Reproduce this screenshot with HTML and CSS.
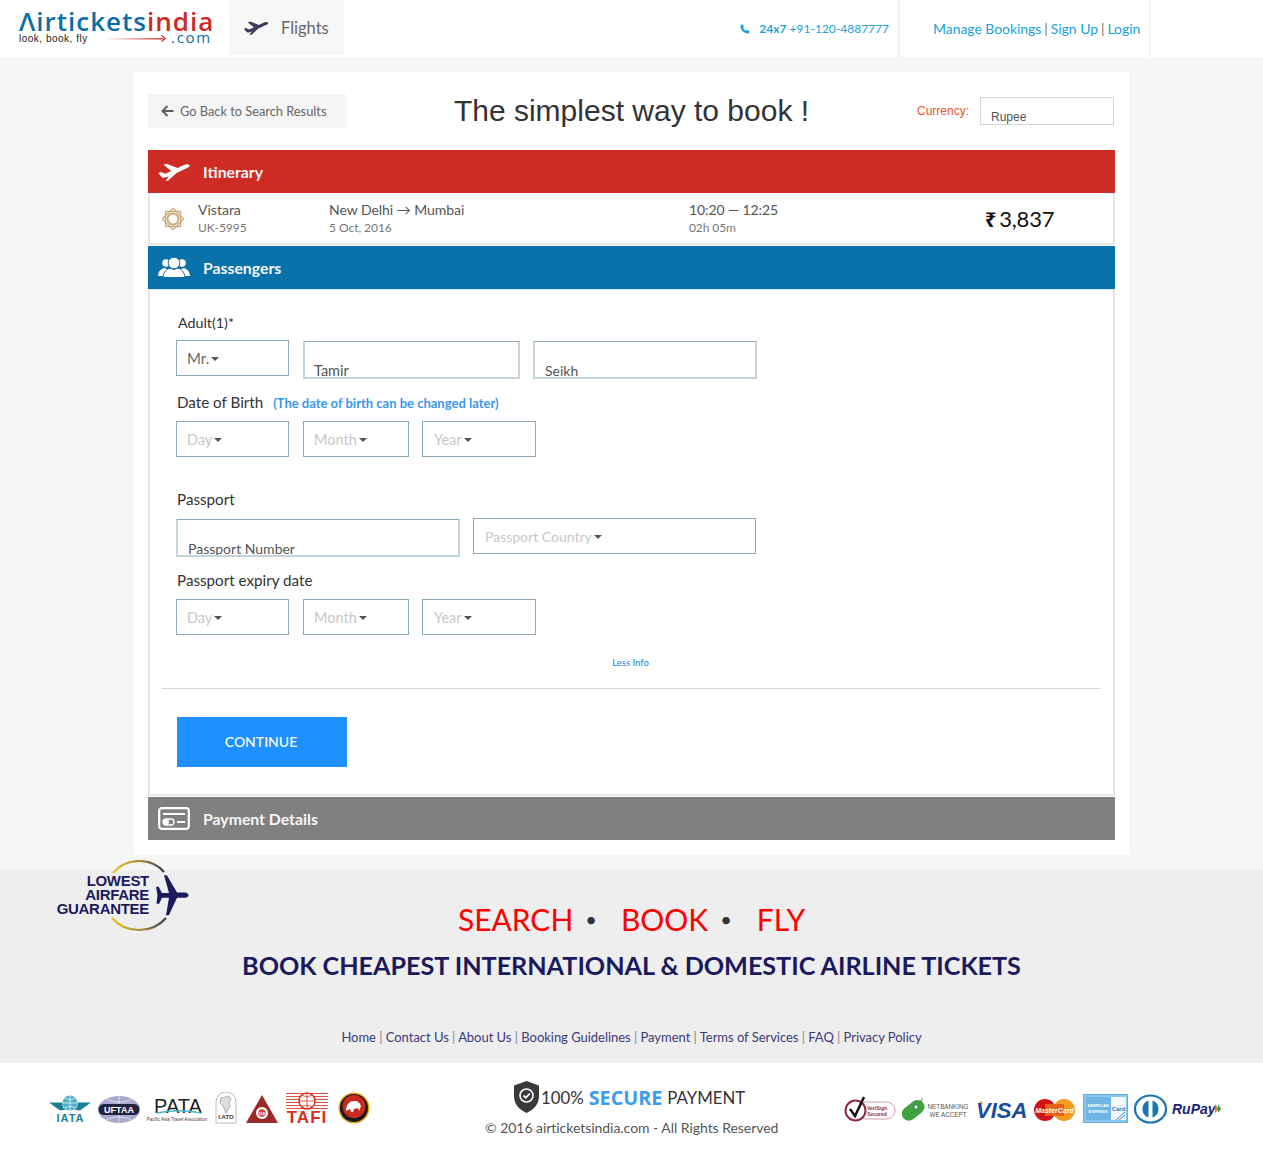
FILE: index.html
```html
<!DOCTYPE html>
<html lang="en">
<head>
<meta charset="utf-8">
<title>Airticketsindia - Book</title>
<link rel="stylesheet" href="styles.css">
</head>
<body>
<header class="topbar">
  <a class="logo">
    <span class="logo-main"><span class="blue">Λirtickets</span><span class="red">india</span></span>
    <span class="logo-sub"><span class="tagline">look, book, fly</span>
      <svg class="logo-arrow" width="62" height="8" viewBox="0 0 62 8"><defs><linearGradient id="ar"><stop offset="0" stop-color="#fff"/><stop offset="1" stop-color="#c8281f"/></linearGradient></defs><rect x="0" y="3.200" width="58" height="1.300" fill="url(#ar)"/><path d="M56 0.500l3 3-3 3 1 .4 4-3.400-4-3.400z" fill="#c8281f"/></svg>
      <span class="dotcom">.com</span></span>
  </a>
  <div class="tab">
    <svg class="tab-plane" width="26" height="14" viewBox="0 0 32 18"><path d="M31.500 2.300c-.9-1.500-4-1.100-6 0L19.600 5 8.400.800 5.500 1.800 13.300 8l-6 2.800-4.400-1.700-2.400 1 3.300 4.200c1 .8 3 .5 5-.2l1.800-.7L7.500 18l2.800-.4 8.300-7.600 10-4.700c2-1 3.500-1.700 2.900-3z" fill="#3f3c59"/></svg>
    <span>Flights</span>
  </div>
  <div class="spacer"></div>
  <div class="phone">
    <svg width="10" height="10" viewBox="0 0 10 10"><path d="M2.300.3L.700 1.300C0 3 1 5.500 2.700 7.300 4.500 9 7 10 8.700 9.300l1-1.600-2.200-1.900-1.300 1C5 6.500 3.500 5 3 3.800l1-1.300z" fill="#1aa0dc"/></svg>
    <span><b>24x7</b> +91-120-4887777</span>
  </div>
  <nav class="account"><a>Manage Bookings</a><i>|</i><a>Sign Up</a><i>|</i><a>Login</a></nav>
</header>

<main class="card">
  <div class="intro">
    <a class="back">
      <svg width="13" height="12" viewBox="0 0 13 12"><path d="M6.500 1L1.500 6l5 5M2 6h10.500" fill="none" stroke="#5f5f5f" stroke-width="2"/></svg>
      <span>Go Back to Search Results</span>
    </a>
    <h1>The simplest way to book !</h1>
    <div class="currency"><label>Currency:</label><div class="currency-box">Rupee</div></div>
  </div>

  <section class="bar bar-red">
    <svg width="32" height="18" viewBox="0 0 32 18"><path d="M31.500 2.300c-.9-1.500-4-1.100-6 0L19.600 5 8.400.8 5.500 1.800 13.300 8l-6 2.800-4.400-1.700-2.400 1 3.300 4.200c1 .8 3 .5 5-.2l1.800-.7L7.500 18l2.800-.4 8.300-7.600 10-4.700c2-1 3.500-1.700 2.900-3z" fill="#fff"/></svg>
    <span>Itinerary</span>
  </section>
  <div class="trip">
    <svg class="emblem" width="24" height="24" viewBox="0 0 24 24" fill="none" stroke="#c9aa78"><rect x="4.500" y="4.500" width="15" height="15" stroke-width="1.300"/><rect x="4.500" y="4.500" width="15" height="15" stroke-width="1.300" transform="rotate(45 12 12)"/><circle cx="12" cy="12" r="5.500" stroke-width="2" fill="#fff"/></svg>
    <div class="col-airline"><div class="t1">Vistara</div><div class="t2">UK-5995</div></div>
    <div class="col-route"><div class="t1">New Delhi → Mumbai</div><div class="t2">5 Oct, 2016</div></div>
    <div class="col-time"><div class="t1">10:20 — 12:25</div><div class="t2">02h 05m</div></div>
    <div class="price"><span class="rupee">₹</span>3,837</div>
  </div>

  <section class="bar bar-blue">
    <svg width="32" height="21" viewBox="0 0 32 21" fill="#fff"><circle cx="8" cy="6" r="3.800"/><circle cx="24" cy="6" r="3.800"/><path d="M0 19c.5-5 3-7 6-8l3 1 2 7zM32 19c-.5-5-3-7-6-8l-3 1-2 7z"/><circle cx="16" cy="6" r="5.800" stroke="#0a72aa"/><path d="M5 20.500c.5-6 4-8.500 7-9.500l4 1.500 4-1.500c3 1 6.500 3.500 7 9.500z" stroke="#0a72aa"/></svg>
    <span>Passengers</span>
  </section>

  <form class="pax">
    <div class="lbl lbl-adult">Adult(1)*</div>
    <div class="row row-name">
      <div class="sel w-title">Mr.<s></s></div>
      <div class="inp w-first">Tamir</div>
      <div class="inp w-last">Seikh</div>
    </div>
    <div class="lbl lbl-dob">Date of Birth <em>(The date of birth can be changed later)</em></div>
    <div class="row row-dob">
      <div class="sel w-title ph">Day<s></s></div>
      <div class="sel w-month ph">Month<s></s></div>
      <div class="sel w-year ph">Year<s></s></div>
    </div>
    <div class="lbl lbl-pass">Passport</div>
    <div class="row row-pass">
      <div class="inp w-num">Passport Number</div>
      <div class="sel w-country ph">Passport Country<s></s></div>
    </div>
    <div class="lbl lbl-exp">Passport expiry date</div>
    <div class="row">
      <div class="sel w-title ph">Day<s></s></div>
      <div class="sel w-month ph">Month<s></s></div>
      <div class="sel w-year ph">Year<s></s></div>
    </div>
    <a class="less">Less Info</a>
    <hr class="rule">
    <button type="button" class="cta">CONTINUE</button>
  </form>

  <section class="bar bar-grey">
    <svg width="32" height="23" viewBox="0 0 32 23" fill="none" stroke="#fff"><rect x="1.200" y="1.200" width="29.600" height="20.600" rx="2.500" stroke-width="2.200"/><path d="M5 7h22" stroke-width="2"/><path d="M19 15h8" stroke-width="2"/><rect x="5" y="12" width="11" height="6" rx="3" stroke-width="1.300"/><circle cx="8" cy="15" r="3" fill="#fff" stroke="none"/></svg>
    <span>Payment Details</span>
  </section>
</main>

<footer class="promo">
  <div class="guarantee">
    <svg width="134" height="72" viewBox="0 0 134 72">
      <defs><linearGradient id="gold"><stop offset="0" stop-color="#f0c419"/><stop offset=".55" stop-color="#a08a3a"/><stop offset="1" stop-color="#3d3a5c"/></linearGradient></defs>
      <path d="M58 13C65 5 73 1 84 1c10 0 19 4 25 11" fill="none" stroke="url(#gold)" stroke-width="2.200"/>
      <path d="M57 58c7 8 16 12 27 12 10 0 20-4 27-12" fill="none" stroke="url(#gold)" stroke-width="2.200"/>
      <path d="M109 15l3 .5L122 32.500h8c2 0 3.500 1.500 3.500 2.700s-1.500 2.500-3.500 2.500h-8L114 55l-3 .5 3-17.800h-7l-3 6.300-2.500-.5 1-8.500-1.500-8 2.500-.5 3.500 6.500h7z" fill="#1b1a5c"/>
      <text class="g-text" x="94" y="26" text-anchor="end">LOWEST</text>
      <text class="g-text" x="94" y="40" text-anchor="end">AIRFARE</text>
      <text class="g-text" x="94" y="54" text-anchor="end">GUARANTEE</text>
    </svg>
  </div>
  <div class="sbf"><span>SEARCH</span><i class="d1">•</i><span>BOOK</span><i class="d2">•</i><span>FLY</span></div>
  <h2>BOOK CHEAPEST INTERNATIONAL &amp; DOMESTIC AIRLINE TICKETS</h2>
  <nav class="links"><a>Home</a> | <a>Contact Us</a> | <a>About Us</a> | <a>Booking Guidelines</a> | <a>Payment</a> | <a>Terms of Services</a> | <a>FAQ</a> | <a>Privacy Policy</a></nav>
</footer>

<div class="trust">
  <div class="assoc">
    <svg width="50" height="32" viewBox="0 0 50 32"><circle cx="22" cy="11" r="7.500" fill="#4fb0c6"/><path d="M15 11h14M22 3.500v15M17 6c3 2 7 2 10 0M17 16c3-2 7-2 10 0" stroke="#fff" stroke-width=".7" fill="none"/><path d="M1 10.500l13 0 1 5 3 2-6 1zM43 10.500l-13 0-1 5-3 2 6 1z" fill="#1d7f97"/><text class="l-iata" x="22.500" y="30" text-anchor="middle">IATA</text></svg>
    <svg width="47" height="32" viewBox="0 0 47 32"><ellipse cx="21" cy="17.500" rx="21" ry="13.500" fill="#a9a8cf"/><path d="M0 17.500h42M21 4v27M8 7c8 4 18 4 26 0M8 28c8-4 18-4 26 0" stroke="#fff" stroke-width=".6" fill="none"/><rect x=".5" y="12" width="41" height="11" rx="5.500" fill="#23233f"/><text class="l-uftaa" x="21" y="21" text-anchor="middle">UFTAA</text></svg>
    <svg width="70" height="32" viewBox="0 0 70 32"><text class="l-pata" x="33" y="21" text-anchor="middle">PATA</text><path d="M12 21c14-3 30-3 44 0" stroke="#48b7c6" stroke-width="1.500" fill="none"/><text class="l-pata-s" x="32" y="29" text-anchor="middle">Pacific Asia Travel Association</text></svg>
    <svg width="31" height="32" viewBox="0 0 31 32"><path d="M1 31V10a10 10 0 0 1 20 0v21z" fill="#fff" stroke="#bbb"/><path d="M6 6l8-2 2 3-2 4 1 3-4 7-3-7-3-3z" fill="#ddd" stroke="#888" stroke-width=".6"/><text class="l-iato" x="11" y="26.500" text-anchor="middle">I.ATO</text></svg>
    <svg width="40" height="32" viewBox="0 0 40 32"><path d="M16 3l16 28H0z" fill="#9c2a2a"/><circle cx="16" cy="21" r="6" fill="#fff"/><circle cx="16" cy="21" r="3.800" fill="#c9453f"/><text class="l-taai" x="16" y="22.500" text-anchor="middle">TAAI</text></svg>
    <svg width="51" height="36" viewBox="0 0 51 36"><g stroke="#e2543f" stroke-width="1"><path d="M0 1.500h42M0 4.500h42M0 7.500h42M0 10.500h42M0 13.500h42M0 16.500h42"/></g><circle cx="21" cy="9" r="8" fill="#fff" stroke="#d8301f" stroke-width="1.500"/><path d="M13 9h16M21 1v16M16 3c3 2 7 2 10 0M16 15c3-2 7-2 10 0" stroke="#d8301f" fill="none" stroke-width=".8"/><text class="l-tafi" x="21" y="31" text-anchor="middle">TAFI</text></svg>
    <svg width="35" height="32" viewBox="0 0 35 32"><circle cx="17" cy="16" r="15.500" fill="#e8a81c"/><circle cx="17" cy="16" r="14" fill="#1a1a1a"/><circle cx="17" cy="14.500" r="11.500" fill="#c92a20"/><path d="M9 19c0-7 4-10 8-10 4 0 6 2 7 5l-2 5-1-3-4 1-1 3h-2l-1-3-2 1z" fill="#fff"/></svg>
  </div>
  <div class="secure">
    <div class="secure-line">
      <svg width="25" height="32" viewBox="0 0 25 32"><path d="M12.500 0L25 4.500V15c0 8-5 13.500-12.500 17C5 28.500 0 23 0 15V4.500z" fill="#3a3a3a"/><circle cx="12.500" cy="14.500" r="6.500" fill="none" stroke="#fff" stroke-width="1.600"/><path d="M9.500 14.500l2.300 2.300 4-4.300" fill="none" stroke="#fff" stroke-width="1.800"/></svg>
      <span class="pct">100%</span><b>SECURE</b><span class="pay">PAYMENT</span>
    </div>
    <div class="copy">© 2016 airticketsindia.com - All Rights Reserved</div>
  </div>
  <div class="pay-logos">
    <svg width="58" height="30" viewBox="0 0 58 30"><rect x="14" y="8" width="37" height="17" rx="8.500" fill="#fff" stroke="#d79aa6"/><circle cx="11.500" cy="16.500" r="10" fill="#fff" stroke="#8f2a44" stroke-width="2"/><path d="M6 15l5 7 9-19" fill="none" stroke="#111" stroke-width="2.500"/><text class="l-veri" x="33" y="15.500" text-anchor="middle">VeriSign</text><text class="l-veri" x="33" y="21.500" text-anchor="middle">Secured</text></svg>
    <svg width="74" height="30" viewBox="0 0 74 30"><rect x="-1" y="9.500" width="25" height="14" rx="7" transform="rotate(-38 11 17)" fill="#3fa142"/><circle cx="14" cy="13" r="2.200" fill="#fff" stroke="#2a7a2e"/><path d="M18 7c3 0 3-2 1-3" fill="none" stroke="#666"/><text class="l-net" x="46" y="15" text-anchor="middle">NETBANKING</text><text class="l-net" x="46" y="22.500" text-anchor="middle">WE ACCEPT</text></svg>
    <svg width="58" height="30" viewBox="0 0 58 30"><path d="M0 7.500c3 0 7 2 8 5l-2-5z" fill="#e9a321"/><text class="l-visa" x="0" y="24">VISA</text></svg>
    <svg width="49" height="30" viewBox="0 0 49 30"><circle cx="30" cy="16" r="11" fill="#f29c1f"/><circle cx="11" cy="16" r="11" fill="#d0121b"/><rect x="11" y="10" width="19" height="12" fill="#e8601c"/><text class="l-mc" x="20.500" y="18.500" text-anchor="middle">MasterCard</text></svg>
    <svg width="51" height="30" viewBox="0 0 51 30"><rect x=".5" y=".5" width="44" height="28" fill="#8cc8ee" stroke="#63aee0"/><rect x="28" y="3" width="15" height="23" fill="#f3f8fc"/><rect x="3" y="3" width="25" height="23" fill="#6fb6e6"/><text class="l-amex" x="15" y="13" text-anchor="middle">AMERICAN</text><text class="l-amex" x="15" y="19" text-anchor="middle">EXPRESS</text><text class="l-amexc" x="35.500" y="17" text-anchor="middle">Card</text><path d="M33 26l9-8M36 26l6-5" stroke="#3a8ac4"/></svg>
    <svg width="38" height="30" viewBox="0 0 38 30"><ellipse cx="16.500" cy="15" rx="15.500" ry="13.500" fill="#fff" stroke="#1b77b3" stroke-width="2.200"/><path d="M14.500 6.500a9 9 0 0 0 0 17zM18.500 6.500a9 9 0 0 1 0 17z" fill="#1b77b3"/></svg>
    <svg width="50" height="30" viewBox="0 0 50 30"><text class="l-rupay" x="0" y="20">RuPay</text><path d="M43 10l4 5-4 4z" fill="#ef7d22"/><path d="M46 10l3 5-3 4z" fill="#2e9a47"/></svg>
  </div>
</div>
</body>
</html>
```
FILE: styles.css
```css
* { box-sizing: border-box; }
html, body { margin: 0; padding: 0; }
body { background: #f6f6f6; font-family: Lato, "Open Sans", sans-serif; color: #444; width: 1263px; overflow-x: hidden; }
a { text-decoration: none; }

.topbar { display: flex; align-items: stretch; height: 57px; background: #fff; }
.logo { display: block; width: 229px; padding: 8px 0 0 19px; font-family: "Open Sans", sans-serif; }
.logo-main { display: block; font-size: 26px; line-height: 27px; font-weight: 600; letter-spacing: 1px; white-space: nowrap; }
.blue { color: #0b6fa6; }
.red { color: #ce2b25; }
.logo-sub { display: flex; align-items: center; height: 12px; margin-top: -3px; width: 193px; }
.tagline { width: 86px; font: 10px "Liberation Sans", sans-serif; color: #222; letter-spacing: .5px; white-space: nowrap; }
.logo-arrow { flex: none; margin-top: 2px; }
.dotcom { margin: -2px 0 0 4px; font-size: 15px; color: #0b6fa6; letter-spacing: 1.700px; line-height: 12px; }
.tab { display: flex; align-items: center; gap: 12px; width: 115px; height: 55px; padding-left: 14px; background: #f7f7f7; font-size: 16.500px; color: #666; }
.spacer { flex: 1; }
.phone { display: flex; align-items: center; gap: 9px; height: 57px; padding-right: 9px; font-size: 12px; color: #19a3de; white-space: nowrap; }
.phone b { font-weight: 700; }
.account { display: flex; align-items: center; width: 252px; height: 57px; padding-left: 33px; border-left: 2px solid #eee; border-right: 1px solid #eee; margin-right: 113px; font-size: 14px; letter-spacing: -.05px; color: #777; }
.account a { color: #19a3de; }
.account i { font-style: normal; margin: 0 3px; }

.card { width: 995px; height: 783px; margin: 15px 0 15px 134px; padding: 0 14px; background: #fff; }
.intro { display: flex; align-items: flex-start; height: 78px; }
.back { display: flex; flex: none; align-items: center; gap: 6px; width: 198px; height: 34px; margin-top: 22px; padding-left: 13px; background: #f5f5f5; font-size: 12.800px; color: #666; white-space: nowrap; }
.intro h1 { flex: 1; margin: 20px 0 0; text-align: center; font: 400 30px/38px "Liberation Sans", Arial, sans-serif; color: #333; }
.currency { display: flex; flex: none; align-items: center; width: 198px; margin-top: 25px; font: 12px "Liberation Sans", Arial, sans-serif; }
.currency label { width: 63px; color: #f0552b; }
.currency-box { width: 134px; height: 28px; padding: 12px 0 0 10px; border: 1px solid #d4d4d4; color: #555; line-height: 15px; }

.bar { display: flex; align-items: center; width: 967px; height: 43px; padding-left: 10px; color: #fff; font-size: 15.800px; font-weight: 700; }
.bar svg { margin-right: 13px; }
.bar-red { background: #ce2b25; }
.bar-blue { background: #0a72aa; margin-top: 1px; }
.bar-grey { background: #808080; margin-top: 1px; }
.bar span { color: #f4f6f8; }

.trip { display: flex; align-items: center; width: 967px; height: 52px; padding: 2px 0 0 11px; border: 2px solid #e4e8eb; border-top: 0; }
.emblem { flex: none; margin-right: 13px; }
.col-airline { width: 131px; }
.col-route { width: 360px; letter-spacing: -.04px; }
.col-time { width: 296px; letter-spacing: -.1px; }
.t1 { font-size: 14px; line-height: 18px; color: #555; }
.t2 { font-size: 12px; line-height: 18px; color: #777; }
.price { font-size: 22px; letter-spacing: -.2px; color: #111; white-space: nowrap; }
.rupee { margin-right: 3px; font: 700 20px "Noto Sans", "DejaVu Sans", sans-serif; }

.pax { width: 967px; height: 507px; padding: 0 12px; border: 2px solid #e4e8eb; border-top: 1px solid #e4e8eb; background: #fff; }
.lbl { padding-left: 15px; font-size: 15.200px; line-height: 20px; color: #333; }
.lbl-adult { margin-top: 23px; padding-left: 16px; font-size: 14.300px; }
.lbl-dob { margin-top: 13px; }
.lbl-dob em { margin-left: 6px; font-style: normal; font-weight: 700; font-size: 13px; color: #3b97f0; }
.lbl-pass { margin-top: 32px; }
.lbl-exp { margin-top: 13px; }
.row { display: flex; align-items: flex-start; gap: 14px; margin: 9px 0 0 14px; }
.row-name { margin-top: 7px; }
.row-dob { margin-top: 8px; }
.sel { display: flex; align-items: center; height: 36px; padding-left: 10px; border: 1px solid #8ba9b9; font-size: 15px; color: #666; white-space: nowrap; }
.sel s { display: block; margin: 1px 0 0 2px; border: 4.500px solid transparent; border-top-color: #555; border-bottom: 0; }
.ph { color: #c8c8c8; font-size: 14.500px; }
.inp { height: 38px; margin-top: 1px; padding: 20px 0 0 10px; border-style: solid; border-width: 1px 2px 2px; border-color: #8ba9b9 #c5d5de #c5d5de; font-size: 14px; line-height: 17px; color: #555; overflow: hidden; }
.w-title { width: 113px; }
.w-first { width: 217px; padding-left: 9px; font-size: 14.500px; }
.w-last { width: 224px; margin-left: -1px; }
.w-month { width: 106px; }
.w-year { width: 114px; margin-left: -1px; padding-left: 11px; }
.w-num { width: 284px; }
.w-country { width: 283px; margin-left: -1px; padding-left: 11px; font-size: 14px; }
.less { display: block; margin-top: 22px; padding-right: 2px; text-align: center; font-size: 9.500px; line-height: 12px; color: #1a7fd6; }
.rule { margin: 19px 0 0; border: 0; border-top: 1px solid #d9d9d9; }
.cta { display: block; width: 170px; height: 50px; margin: 28px 0 0 15px; padding: 0 2px 2px 0; border: 0; background: #1e90ff; color: #fff; font: 500 14px Lato, sans-serif; }

.promo { position: relative; height: 193px; background: #eee; text-align: center; }
.guarantee { position: absolute; left: 55px; top: -10px; }
.g-text { font: 800 15px "Liberation Sans", Arial, sans-serif; fill: #1b1a5c; letter-spacing: -.3px; }
.sbf { display: flex; justify-content: center; height: 64px; padding-top: 29px; font-size: 30px; line-height: 40px; color: #f00; white-space: nowrap; }
.sbf i { font-style: normal; color: #333; font-size: 20px; }
.sbf .d1 { margin: 0 24px 0 12px; }
.sbf .d2 { margin: 0 25px 0 12px; }
.promo h2 { margin: 14px 0 0; font-size: 25.200px; line-height: 34px; font-weight: 700; letter-spacing: -.03px; color: #1b1a5c; }
.links { margin-top: 46px; font-size: 13px; line-height: 18px; letter-spacing: -.03px; color: #888; }
.links a { color: #3b3a7a; }

.trust { display: grid; grid-template-columns: 437px 293px 1fr; height: 93px; padding-left: 48px; background: #fff; }
.assoc { display: flex; align-items: flex-start; padding-top: 29px; }
.assoc svg, .pay-logos svg { display: block; flex: none; }
.secure { padding-top: 18px; text-align: center; }
.secure-line { display: flex; align-items: center; height: 32px; padding-left: 29px; font-size: 16.800px; color: #333; white-space: nowrap; }
.pct { margin-left: 2px; }
.secure-line b { margin: 0 5px; font: 700 19.800px "Open Sans", sans-serif; color: #3d9bf0; }
.copy { margin-top: 6px; font-size: 14px; line-height: 18px; letter-spacing: -.04px; color: #555; white-space: nowrap; }
.pay-logos { display: flex; justify-content: flex-end; padding: 31px 41px 0 0; }

.l-iata { font: 900 11px "Liberation Sans", sans-serif; fill: #1d7f97; letter-spacing: 1px; }
.l-uftaa { font: 700 9px "Liberation Sans", sans-serif; fill: #fff; }
.l-pata { font: 400 20px "Liberation Sans", sans-serif; fill: #222; }
.l-pata-s { font: 400 4.500px "Liberation Sans", sans-serif; fill: #444; }
.l-iato { font: 700 6px "Liberation Sans", sans-serif; fill: #333; }
.l-taai { font: 700 3px "Liberation Sans", sans-serif; fill: #fff; }
.l-tafi { font: 900 17px "Liberation Sans", sans-serif; fill: #d8301f; letter-spacing: 1px; }
.l-veri { font: 700 5px "Liberation Sans", sans-serif; fill: #8f2a44; }
.l-net { font: 400 6.300px "Liberation Sans", sans-serif; fill: #555; }
.l-visa { font: italic 900 22px "Liberation Sans", sans-serif; fill: #1a4c9b; }
.l-mc { font: italic 700 7px "Liberation Sans", sans-serif; fill: #fff; }
.l-amex { font: 700 4px "Liberation Sans", sans-serif; fill: #fff; }
.l-amexc { font: 700 6px "Liberation Sans", sans-serif; fill: #1b77b3; }
.l-rupay { font: italic 700 14px "Liberation Sans", sans-serif; fill: #1c1f7c; }
```
